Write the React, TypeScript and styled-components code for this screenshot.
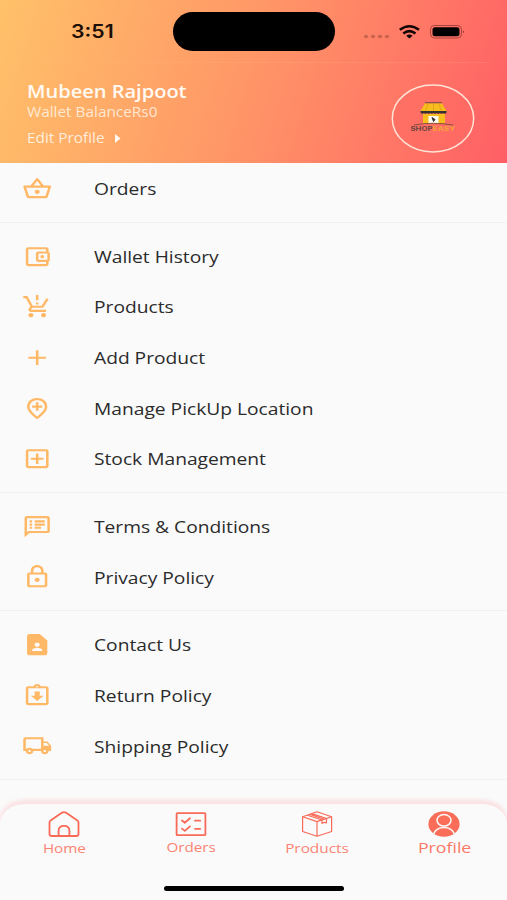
import React from "react";
import styled, { createGlobalStyle } from "styled-components";
import type { IconType } from "react-icons";
import {
  MdAdd,
  MdContactPage,
  MdOutlineAccountBalanceWallet,
  MdOutlineAddBox,
  MdOutlineAddLocation,
  MdOutlineAssignmentReturned,
  MdOutlineLocalShipping,
  MdOutlineLock,
  MdOutlineShoppingBasket,
  MdOutlineSpeakerNotes,
  MdProductionQuantityLimits,
} from "react-icons/md";

const GlobalStyle = createGlobalStyle`
  *, *::before, *::after { box-sizing: border-box; }
  body { margin: 0; background: #fafafa; font-family: "Open Sans", "Noto Sans", sans-serif; }
`;

const Screen = styled.div`
  width: 507px;
  height: 900px;
  display: flex;
  flex-direction: column;
  overflow: hidden;
  background: #fafafa;
`;

const Header = styled.header`
  height: 163.4px;
  flex: none;
  display: flex;
  flex-direction: column;
  background: linear-gradient(107deg, #ffc169 0%, #ff9567 50%, #ff5f65 100%);
`;

const StatusBar = styled.div`
  height: 63px;
  flex: none;
  display: grid;
  grid-template-columns: 173px 162px 1fr;
  align-items: center;
`;

const Wide = styled.span<{ $x?: number; $center?: boolean }>`
  display: inline-block;
  white-space: nowrap;
  transform: scaleX(${(p) => p.$x ?? 1.2});
  transform-origin: ${(p) => (p.$center ? "center" : "left")} center;
`;

const Clock = styled.div`
  padding: 1px 0 0 71px;
  font: 600 18px/24px Inter, sans-serif;
  color: #1c0d05;
`;

const Island = styled.div`
  height: 39px;
  border-radius: 20px;
  background: #000;
`;

const StatusIcons = styled.svg`
  display: block;
  width: 172px;
  height: 24px;
`;

const HeaderLine = styled.div`
  height: 1px;
  margin: -1px 18px 0 36px;
  background: rgba(255, 190, 140, 0.16);
`;

const Account = styled.div`
  display: flex;
  justify-content: space-between;
  padding: 16px 33px 0 27px;
`;

const Name = styled.div`
  font-size: 18px;
  font-weight: 600;
  line-height: 24px;
  color: #fffaf3;
`;

const Wallet = styled.div`
  font-size: 13.6px;
  line-height: 18px;
  color: rgba(255, 247, 235, 0.82);
`;

const EditProfile = styled.div`
  display: flex;
  align-items: center;
  margin-top: 8px;
  font-size: 13.6px;
  line-height: 18px;
  color: rgba(255, 247, 235, 0.88);
`;

const EditLabel = styled.div`
  width: 88.4px;
`;

const Caret = styled.svg`
  width: 6px;
  height: 9px;
`;

const Logo = styled.svg`
  width: 84px;
  height: 70px;
  margin: 5px -0.5px 0 0;
  flex: none;
`;

const Menu = styled.main`
  flex: 1;
  min-height: 0;
`;

const Section = styled.section`
  padding-bottom: 7.6px;
  margin-bottom: 8.4px;
  border-bottom: 1px solid #f0f0f0;
`;

const Row = styled.div`
  height: 50.65px;
  display: flex;
  align-items: center;
  padding-left: 21.6px;
  font-size: 16px;
  line-height: 22px;
  color: #2b2b2b;
`;

const RowLabel = styled.span`
  padding-top: 1px;
`;

const RowIcon = styled.span`
  display: flex;
  width: 72.2px;
  color: #ffb866;

  svg {
    width: 30.4px;
    height: 25.4px;
  }
`;

const NavBar = styled.nav`
  height: 96px;
  flex: none;
  position: relative;
  display: flex;
  flex-direction: column;
  align-items: center;
  border-radius: 25px 25px 0 0 / 20px 20px 0 0;
  background: #fafafa;
  box-shadow: 0 -4px 4px rgba(255, 130, 140, 0.22);
`;

const Tabs = styled.div`
  display: grid;
  grid-template-columns: repeat(4, 1fr);
  width: 100%;
  height: 82px;
`;

const Tab = styled.div<{ $active?: boolean; $raised?: boolean }>`
  display: flex;
  flex-direction: column;
  align-items: center;
  padding: 6px 0 0 1px;
  font-size: ${(p) => (p.$active ? "15px" : "13px")};
  line-height: 18px;
  color: ${(p) => (p.$active ? "#fb7866" : "#fa8374")};

  svg {
    width: 34px;
    height: 28px;
  }

  span {
    margin-top: ${(p) => (p.$active || p.$raised ? "0" : "1px")};
  }
`;

const HomeIndicator = styled.div`
  width: 180px;
  height: 5px;
  margin-left: 1px;
  border-radius: 3px;
  background: #000;
`;

type Item = { label: string; icon: IconType };

const sections: Item[][] = [
  [{ label: "Orders", icon: MdOutlineShoppingBasket }],
  [
    { label: "Wallet History", icon: MdOutlineAccountBalanceWallet },
    { label: "Products", icon: MdProductionQuantityLimits },
    { label: "Add Product", icon: MdAdd },
    { label: "Manage PickUp Location", icon: MdOutlineAddLocation },
    { label: "Stock Management", icon: MdOutlineAddBox },
  ],
  [
    { label: "Terms & Conditions", icon: MdOutlineSpeakerNotes },
    { label: "Privacy Policy", icon: MdOutlineLock },
  ],
  [
    { label: "Contact Us", icon: MdContactPage },
    { label: "Return Policy", icon: MdOutlineAssignmentReturned },
    { label: "Shipping Policy", icon: MdOutlineLocalShipping },
  ],
];

const ShopLogo = () => (
  <Logo viewBox="0 0 84 70">
    <ellipse cx="42" cy="34.500" rx="40.7" ry="33.4" fill="#ff6b62" fillOpacity="0.55" stroke="#ffe3d6" strokeWidth="1.5" />
    <path d="M34 18.8H51" stroke="#5b4a35" strokeWidth="1" />
    <path d="M34 19.5H51L55.5 27H29.5Z" fill="#f7bd1c" />
    <path d="M37 20L34.5 27M42.500 20V27M48 20L50.500 27" stroke="#dc9c1c" strokeWidth="0.8" />
    <path d="M29.500 27H55.500V28.500Q53.900 30.600 52.200 29Q50.600 30.600 49 29Q47.400 30.600 45.800 29Q44.200 30.600 42.500 29Q40.900 30.600 39.200 29Q37.600 30.600 36 29Q34.400 30.600 32.800 29Q31 30.600 29.500 28.500Z" fill="#33332f" />
    <path d="M32 30H54V39.500H32Z" fill="#f7bd1c" />
    <rect x="37.500" y="32" width="10" height="7" fill="#fffdf5" />
    <path d="M41 33.500L44 35.500L42.500 37.500Z" stroke="#333" strokeWidth="1" fill="#333" />
    <path d="M23 41Q42 37.500 62 41" fill="none" stroke="#7c4b3d" strokeWidth="0.9" />
    <text x="19.500" y="46.500" fontFamily="Inter, sans-serif" fontSize="6.200" fontWeight="700" textLength="22" lengthAdjust="spacingAndGlyphs" fill="#6b4540">SHOP</text>
    <text x="41.500" y="46.500" fontFamily="Inter, sans-serif" fontSize="6.200" fontWeight="700" textLength="23" lengthAdjust="spacingAndGlyphs" fill="#f5a13b">EASY</text>
  </Logo>
);

const HomeIcon = () => (
  <svg viewBox="0 0 34 28" fill="none" stroke="#f96b58" strokeWidth="1.8" strokeLinejoin="round">
    <path d="M4.600 26Q2.500 26 2.500 24V12.500Q2.500 11.400 3.600 10.600L14.800 2.800Q17 1.400 19.200 2.800L30.400 10.600Q31.500 11.400 31.500 12.500V24Q31.500 26 29.400 26Z" />
    <path d="M11.600 26V20.500Q11.600 15.800 17 15.800Q22.400 15.800 22.400 20.500V26" />
  </svg>
);

const OrdersIcon = () => (
  <svg viewBox="0 0 34 28" fill="none" stroke="#f96b58" strokeWidth="1.8" strokeLinecap="round" strokeLinejoin="round">
    <rect x="2.600" y="3.200" width="28.800" height="22" rx="0.800" />
    <path d="M8 10.500L10.800 12.800L16 8.300M8 18.600L10.800 20.900L16 16.400" />
    <path d="M21 10.700H26.200M21 18.800H26.200" />
  </svg>
);

const ProductsIcon = () => (
  <svg viewBox="0 0 34 28" fill="none" stroke="#f96b58" strokeWidth="1.200" strokeLinejoin="round">
    <path d="M17 1.800L31.600 6.800V21.500L17 26.300L2.600 21.500V6.800Z" />
    <path d="M2.600 6.800L17 11.600L31.600 6.800M17 11.600V26.300" />
    <path d="M7.500 5.200L22 10V13.500L24.200 12.300L26.500 12.800V8.500L12 3.600M10 4.400L24.400 9.200" />
  </svg>
);

const ProfileIcon = () => (
  <svg viewBox="0 0 34 28">
    <ellipse cx="17" cy="14" rx="15.600" ry="12.700" fill="#fa6d59" />
    <ellipse cx="17" cy="10.300" rx="7" ry="5.700" fill="none" stroke="#fafafa" strokeWidth="1.500" />
    <path d="M6.800 23.800Q9.300 17.400 17 17.400Q24.700 17.400 27.200 23.800" fill="none" stroke="#fafafa" strokeWidth="1.500" />
  </svg>
);

export default function App() {
  return (
    <>
      <GlobalStyle />
      <Screen>
        <Header>
          <StatusBar>
            <Clock><Wide $x={1.18}>3:51</Wide></Clock>
            <Island />
            <StatusIcons viewBox="335 20 172 24">
              <g fill="#7c3b2c" fillOpacity="0.4">
                <ellipse cx="366" cy="36.500" rx="2.200" ry="1.800" />
                <ellipse cx="373" cy="36.500" rx="2.200" ry="1.800" />
                <ellipse cx="380" cy="36.500" rx="2.200" ry="1.800" />
                <ellipse cx="387" cy="36.500" rx="2.200" ry="1.800" />
              </g>
              <g fill="none" stroke="#120505" strokeWidth="2.500">
                <path d="M399.800 29.800Q409.400 22.600 419 29.800" />
                <path d="M403.300 33.500Q409.400 28.800 415.500 33.500" />
              </g>
              <path d="M406.200 35.700Q409.400 33.500 412.600 35.700L409.400 38.500Z" fill="#120505" />
              <rect x="430.500" y="25.500" width="31" height="12.500" rx="4" fill="none" stroke="#7c2b29" strokeOpacity="0.650" />
              <rect x="432.500" y="27.300" width="27" height="9" rx="2.500" fill="#000" />
              <path d="M463.200 30V33.700Q464.900 31.800 463.200 30Z" fill="#7c2b29" />
            </StatusIcons>
          </StatusBar>
          <HeaderLine />
          <Account>
            <div>
              <Name><Wide $x={1.113}>Mubeen Rajpoot</Wide></Name>
              <Wallet><Wide $x={1.13}>Wallet BalanceRs0</Wide></Wallet>
              <EditProfile>
                <EditLabel><Wide $x={1.13}>Edit Profile</Wide></EditLabel>
                <Caret viewBox="0 0 6 9"><path d="M0 0L5.500 4.500L0 9Z" fill="#fffaf3" /></Caret>
              </EditProfile>
            </div>
            <ShopLogo />
          </Account>
        </Header>
        <Menu>
          {sections.map((items) => (
            <Section key={items[0].label}>
              {items.map(({ label, icon: Icon }) => (
                <Row key={label}>
                  <RowIcon><Icon preserveAspectRatio="none" /></RowIcon>
                  <RowLabel><Wide>{label}</Wide></RowLabel>
                </Row>
              ))}
            </Section>
          ))}
        </Menu>
        <NavBar>
          <Tabs>
            <Tab><HomeIcon /><Wide $center $x={1.17}>Home</Wide></Tab>
            <Tab $raised><OrdersIcon /><Wide $center $x={1.17}>Orders</Wide></Tab>
            <Tab><ProductsIcon /><Wide $center $x={1.18}>Products</Wide></Tab>
            <Tab $active><ProfileIcon /><Wide $center $x={1.18}>Profile</Wide></Tab>
          </Tabs>
          <HomeIndicator />
        </NavBar>
      </Screen>
    </>
  );
}
